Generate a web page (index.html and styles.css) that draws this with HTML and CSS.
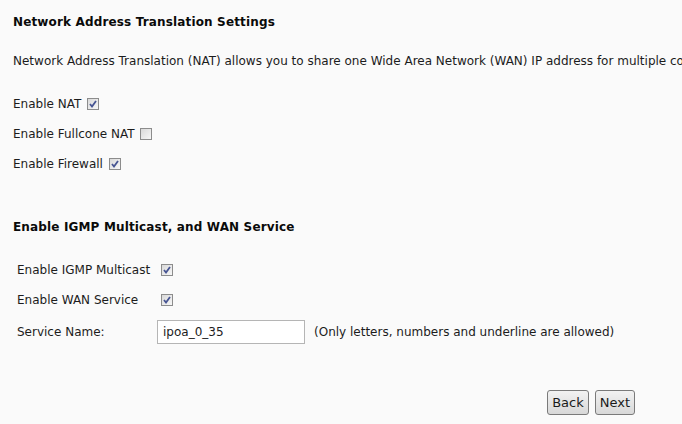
FILE: index.html
```html
<!DOCTYPE html>
<html lang="en">
<head>
  <meta charset="UTF-8" />
  <title>WAN Setup</title>
  <link rel="stylesheet" href="styles.css">
</head>
<body>

  <!-- NAT settings -->
  <h4 class="title">Network Address Translation Settings</h4>
  <p class="desc">Network Address Translation (NAT) allows you to share one Wide Area Network (WAN) IP address for multiple computers on your Local Area Network (LAN).</p>

  <div class="opt">Enable NAT <input type="checkbox" class="chk" checked></div>
  <div class="opt">Enable Fullcone NAT <input type="checkbox" class="chk"></div>
  <div class="opt">Enable Firewall <input type="checkbox" class="chk" checked></div>

  <!-- IGMP / WAN service -->
  <h4 class="title title2">Enable IGMP Multicast, and WAN Service</h4>
  <table class="svc">
    <tr class="r1">
      <td class="lbl">Enable IGMP Multicast</td>
      <td><input type="checkbox" class="chk" checked></td>
    </tr>
    <tr class="r2">
      <td class="lbl">Enable WAN Service</td>
      <td><input type="checkbox" class="chk" checked></td>
    </tr>
    <tr class="r3">
      <td class="lbl">Service Name:</td>
      <td><input type="text" class="txt" value="ipoa_0_35"><span class="hint">(Only letters, numbers and underline are allowed)</span></td>
    </tr>
  </table>

  <div class="btns">
    <button class="btn">Back</button>
    <button class="btn">Next</button>
  </div>

</body>
</html>
```

FILE: styles.css
```css
body { margin: 0; padding: 14px 0 0 13px; background: #fafafa; color: #1c1c1c; font-family: "DejaVu Sans", Verdana, sans-serif; font-size: 12px; line-height: 16px; white-space: nowrap; overflow: hidden; }
.title { margin: 0; font-size: 12px; font-weight: bold; letter-spacing: 0.15px; color: #0a0a0a; }
.title2 { margin-top: 40px; }
.desc { margin: 23px 0 20px; }
.opt { height: 30px; line-height: 30px; }
.chk { appearance: none; -webkit-appearance: none; width: 12px; height: 12px; margin: 0 0 0 2px; vertical-align: -2px; border: 1px solid #8c8c8c; box-sizing: border-box; background: linear-gradient(135deg, #d9d9d9, #f7f7f7); }
.chk:checked { background: url("data:image/svg+xml,%3Csvg xmlns='http://www.w3.org/2000/svg' width='10' height='10'%3E%3Cpath d='M2 5 L4 7.5 L8 2' fill='none' stroke='%23465492' stroke-width='1.8'/%3E%3C/svg%3E") center no-repeat, linear-gradient(135deg, #d9d9d9, #f7f7f7); }
.svc { border-collapse: collapse; margin-top: 20px; }
.svc td { padding: 0 0 0 4px; }
.svc .lbl { width: 136px; }
.r1, .r2 { height: 30px; }
.r3 { height: 34px; }
.svc .chk { margin-left: 4px; }
.txt { width: 148px; height: 24px; box-sizing: border-box; border: 1px solid #b5b5b5; background: #fff; padding: 0 5px; font: 12px "DejaVu Sans", Verdana, sans-serif; color: #1c1c1c; vertical-align: middle; }
.hint { margin-left: 9px; vertical-align: middle; }
.btns { display: flex; justify-content: flex-end; gap: 6px; width: 622px; margin-top: 41px; }
.btn { height: 25px; padding: 0 4px; border: 1px solid #7a7a7a; border-radius: 3px; background: linear-gradient(#f2f2f2, #d8d8d8); font: 13px "DejaVu Sans", Verdana, sans-serif; color: #1a1a1a; }
```
